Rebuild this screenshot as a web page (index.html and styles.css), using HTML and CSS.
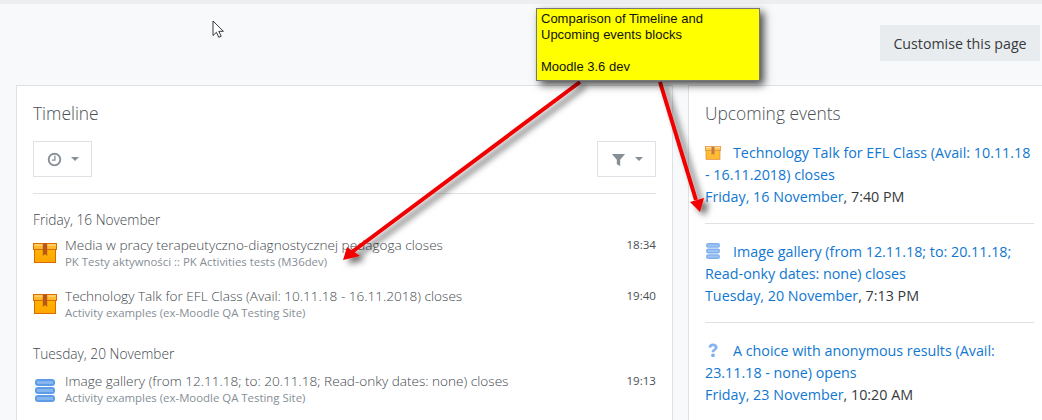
FILE: index.html
```html
<!DOCTYPE html>
<html lang="en">
<head>
    <meta charset="UTF-8">
    <meta name="viewport" content="width=device-width, initial-scale=1.0">
    <title>Timeline and Upcoming events</title>
    <link rel="stylesheet" href="styles.css">
</head>
<body>

    <svg width="0" height="0" class="defs">
        <defs>
            <linearGradient id="box-fill" x1="0" y1="0" x2="0" y2="1">
                <stop offset="0" stop-color="#ffb400"/>
                <stop offset="1" stop-color="#ffa600"/>
            </linearGradient>
            <g id="icon-box">
                <rect x="1.5" y="6" width="21" height="13.5" fill="url(#box-fill)" stroke="#d96b00"/>
                <rect x="0.5" y="0.5" width="23" height="6" fill="#ffb92e" stroke="#d96b00"/>
                <rect x="1.5" y="1.5" width="21" height="1" fill="#ffe29a"/>
                <path d="M9.8 0.5h4.4v12.5l-2.2-2-2.2 2z" fill="#b8561a"/>
            </g>
            <g id="icon-db">
                <rect x="0" y="0" width="20" height="7" rx="3" fill="#5f9ce8"/>
                <rect x="0" y="8" width="20" height="7" rx="3" fill="#5f9ce8"/>
                <rect x="0" y="16" width="20" height="7" rx="3" fill="#5f9ce8"/>
                <rect x="2" y="2" width="16" height="3" fill="#85b6f0"/>
                <rect x="2" y="10" width="16" height="3" fill="#85b6f0"/>
                <rect x="2" y="18" width="16" height="3" fill="#85b6f0"/>
            </g>
        </defs>
    </svg>

    <div class="top-strip"></div>

    <div class="page-header">
        <button type="button" class="btn-customise">Customise this page</button>
    </div>

    <div class="columns">
        <section class="card card-timeline">
            <h5 class="card-title">Timeline</h5>
            <div class="toolbar">
                <button type="button" class="btn-filter">
                    <svg width="15" height="15" viewBox="0 0 16 16"><circle cx="8" cy="8" r="6.2" fill="none" stroke="#868e96" stroke-width="2"/><path d="M8.4 4v4.6H5.2" fill="none" stroke="#868e96" stroke-width="1.4"/></svg>
                    <span class="caret"></span>
                </button>
                <button type="button" class="btn-filter">
                    <svg width="15" height="15" viewBox="0 0 16 16"><path d="M1 2h14L9.8 8.2V15L6.2 13V8.2z" fill="#868e96"/></svg>
                    <span class="caret"></span>
                </button>
            </div>

            <div class="day">
                <h5 class="day-title">Friday, 16 November</h5>
                <div class="event">
                    <svg class="event-icon" width="24" height="20" viewBox="0 0 24 20"><use href="#icon-box"/></svg>
                    <div class="event-body">
                        <div class="event-name">Media w pracy terapeutyczno-diagnostycznej pedagoga closes</div>
                        <div class="event-course">PK Testy aktywności :: PK Activities tests (M36dev)</div>
                    </div>
                    <div class="event-time">18:34</div>
                </div>
                <div class="event">
                    <svg class="event-icon" width="24" height="20" viewBox="0 0 24 20"><use href="#icon-box"/></svg>
                    <div class="event-body">
                        <div class="event-name">Technology Talk for EFL Class (Avail: 10.11.18 - 16.11.2018) closes</div>
                        <div class="event-course">Activity examples (ex-Moodle QA Testing Site)</div>
                    </div>
                    <div class="event-time">19:40</div>
                </div>
            </div>

            <div class="day">
                <h5 class="day-title">Tuesday, 20 November</h5>
                <div class="event">
                    <svg class="event-icon" width="24" height="23" viewBox="-2 0 24 23"><use href="#icon-db"/></svg>
                    <div class="event-body">
                        <div class="event-name">Image gallery (from 12.11.18; to: 20.11.18; Read-onky dates: none) closes</div>
                        <div class="event-course">Activity examples (ex-Moodle QA Testing Site)</div>
                    </div>
                    <div class="event-time">19:13</div>
                </div>
            </div>
        </section>

        <section class="card card-upcoming">
            <h5 class="card-title">Upcoming events</h5>

            <div class="upcoming">
                <a href="#" class="upcoming-name"><svg class="upcoming-icon" width="16" height="14" viewBox="0 0 24 20"><use href="#icon-box"/></svg>Technology Talk for EFL Class (Avail: 10.11.18 - 16.11.2018) closes</a>
                <div class="upcoming-date"><a href="#">Friday, 16 November</a>, 7:40 PM</div>
            </div>
            <div class="upcoming">
                <a href="#" class="upcoming-name"><svg class="upcoming-icon" width="16" height="16" viewBox="0 0 20 23"><use href="#icon-db"/></svg>Image gallery (from 12.11.18; to: 20.11.18; Read-onky dates: none) closes</a>
                <div class="upcoming-date"><a href="#">Tuesday, 20 November</a>, 7:13 PM</div>
            </div>
            <div class="upcoming">
                <a href="#" class="upcoming-name"><svg class="upcoming-icon" width="16" height="16" viewBox="0 0 16 16"><path d="M3.5 5.5C3.5 3 5.6 1.5 8 1.5s4.6 1.4 4.6 3.8c0 3-3.1 3-3.1 5H6.6c0-3.2 3-3.3 3-4.9 0-.8-.7-1.2-1.6-1.2-1 0-1.6.6-1.7 1.5z" fill="#6aa5ec"/><circle cx="8" cy="13.3" r="1.9" fill="#5f9ce8"/></svg>A choice with anonymous results (Avail: 23.11.18 - none) opens</a>
                <div class="upcoming-date"><a href="#">Friday, 23 November</a>, 10:20 AM</div>
            </div>
        </section>
    </div>

    <!-- annotation drawn over the screenshot -->
    <svg class="pointer" width="13" height="19" viewBox="0 0 13 19">
        <path d="M1 1v14.5l3.4-3.2 2.4 5 2.4-1.1-2.4-4.9h4.6z" fill="#fff" stroke="#222" stroke-width="0.9"/>
    </svg>

    <svg class="arrows" width="1042" height="420" viewBox="0 0 1042 420">
        <defs>
            <filter id="arrow-shadow" x="-20%" y="-20%" width="140%" height="140%">
                <feDropShadow dx="5" dy="4" stdDeviation="3" flood-color="#000" flood-opacity="0.6"/>
            </filter>
        </defs>
        <g filter="url(#arrow-shadow)" fill="#f00000">
            <path d="M580 82L352 252" stroke="#f00000" stroke-width="4" fill="none"/>
            <path d="M343 260l4-13 13 9z"/>
            <path d="M660 82L696 200" stroke="#f00000" stroke-width="4" fill="none"/>
            <path d="M700 212l-10-10 14-4z"/>
        </g>
    </svg>

    <div class="note">
        <p>Comparison of Timeline and<br>Upcoming events blocks</p>
        <p>Moodle 3.6 dev</p>
    </div>

</body>
</html>
```

FILE: styles.css
```css
html, body { height: 100%; }
body { margin: 0; padding: 0; background-color: #f8f9fa; font-family: "Open Sans", Arial, sans-serif; font-size: 14.3px; color: #373a3c; overflow: hidden; position: relative; }
.defs { position: absolute; }
.top-strip { height: 4px; background-color: #eceef0; }

.page-header { display: flex; justify-content: flex-end; padding: 21px 2px 24px 0; }
.btn-customise { height: 36px; width: 160px; padding: 0; border: none; background-color: #e9ecef; color: #373a3c; font-family: inherit; font-size: 14.2px; }

.columns { display: grid; grid-template-columns: 657px 354px; column-gap: 15px; padding-left: 16px; height: 335px; overflow: hidden; }
.card { background-color: #fff; border: 1px solid #dee2e6; padding: 16px; height: 400px; box-sizing: border-box; }
.card-upcoming { border-right: none; padding-right: 8px; }
.card-title { margin: 0; font-size: 17.4px; font-weight: 300; line-height: 22px; color: #4a5055; }

.toolbar { display: flex; justify-content: space-between; margin-top: 17px; padding-bottom: 16px; border-bottom: 1px solid #dee2e6; }
.btn-filter { display: flex; align-items: center; justify-content: center; gap: 9px; width: 59px; height: 36px; padding: 0; background-color: #fff; border: 1px solid #dee2e6; }
.caret { width: 0; height: 0; border-left: 4px solid transparent; border-right: 4px solid transparent; border-top: 4px solid #868e96; }

.day { margin-bottom: 23px; }
.day-title { margin: 16px 0 6px; font-size: 13.7px; font-weight: 300; line-height: 20px; color: #43494e; }
.day + .day .day-title { margin-bottom: 8px; }
.event { display: flex; margin-bottom: 17px; }
.event-icon { flex: none; margin: 7px 8px 0 0; }
.event-body { flex: 1; }
.event-name { font-size: 13.6px; font-weight: 300; line-height: 18px; color: #43494e; }
.event-course { font-size: 11.4px; line-height: 16px; color: #868e96; }
.event-time { font-size: 11.6px; line-height: 18px; color: #4a5055; }

.card-upcoming .card-title { margin-bottom: 18px; }
.upcoming { padding-bottom: 15px; margin-bottom: 17px; border-bottom: 1px solid #dee2e6; line-height: 22px; }
.upcoming:last-child { border-bottom: none; }
.upcoming a { color: #1177d1; text-decoration: none; }
.upcoming-name { display: block; }
.upcoming-icon { margin-right: 12px; vertical-align: -2px; opacity: 0.8; }

.pointer { position: absolute; left: 212px; top: 20px; }
.arrows { position: absolute; left: 0; top: 0; }
.note { position: absolute; left: 536px; top: 8px; width: 224px; height: 73px; box-sizing: border-box; padding: 2px 4px; background-color: #ffff00; border: 1px solid #777; box-shadow: 4px 4px 8px rgba(0, 0, 0, 0.7); font-family: "Liberation Sans", Arial, sans-serif; font-size: 13px; line-height: 16px; color: #111; }
.note p { margin: 0 0 16px; }
```
